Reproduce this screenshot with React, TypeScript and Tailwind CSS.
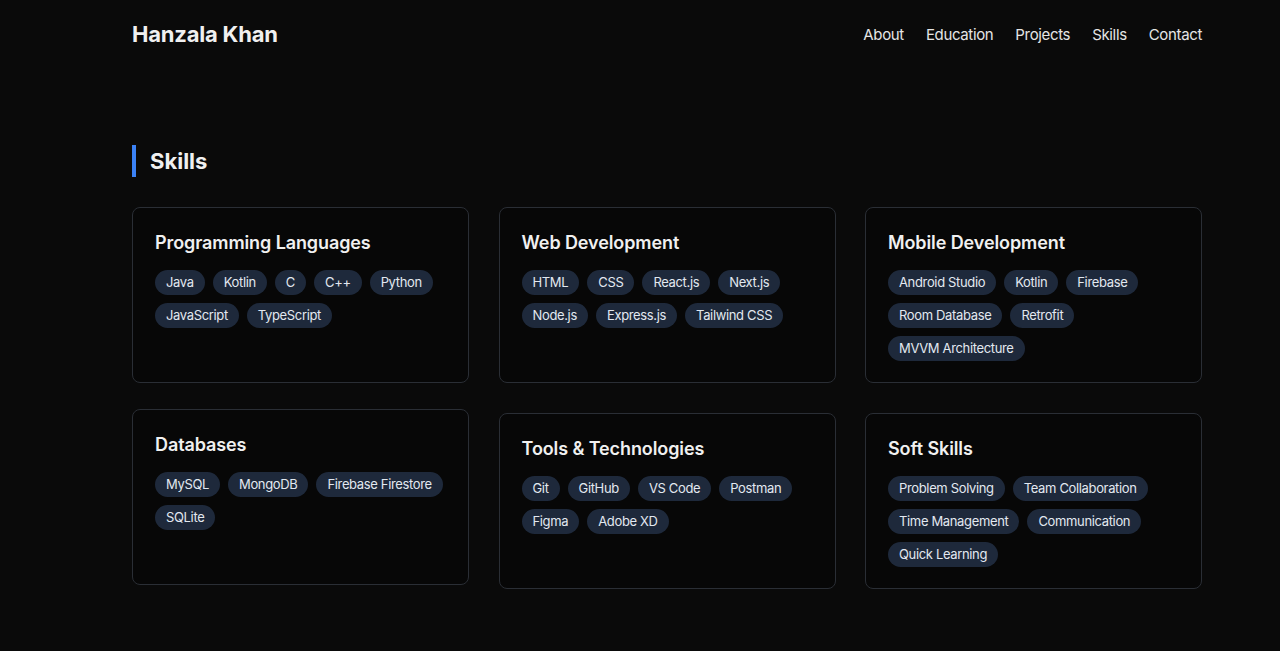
const navLinks = ["About", "Education", "Projects", "Skills", "Contact"]

const skillGroups = [
    { heading: "Programming Languages", items: ["Java", "Kotlin", "C", "C++", "Python", "JavaScript", "TypeScript"] },
    { heading: "Web Development", items: ["HTML", "CSS", "React.js", "Next.js", "Node.js", "Express.js", "Tailwind CSS"] },
    { heading: "Mobile Development", items: ["Android Studio", "Kotlin", "Firebase", "Room Database", "Retrofit", "MVVM Architecture"] },
    { heading: "Databases", items: ["MySQL", "MongoDB", "Firebase Firestore", "SQLite"], raised: true },
    { heading: "Tools & Technologies", items: ["Git", "GitHub", "VS Code", "Postman", "Figma", "Adobe XD"] },
    { heading: "Soft Skills", items: ["Problem Solving", "Team Collaboration", "Time Management", "Communication", "Quick Learning"] },
]

type SkillCardProps = { heading: string; items: string[]; raised?: boolean }

const SkillCard = ({ heading, items, raised }: SkillCardProps) => {
    return (
        <div
            className={
                raised
                    ? "rounded-lg border border-[#2a2e35] bg-[#070707] px-[22px] py-[21px] -translate-y-1"
                    : "rounded-lg border border-[#2a2e35] bg-[#070707] px-[22px] py-[21px]"
            }
        >
            <h3 className="text-[18px] font-semibold leading-7 text-[#f0f0f0] mb-[13px] tracking-[-0.1px]">{heading}</h3>
            <ul className="flex flex-wrap gap-2">
                {items.map((item) => (
                    <li key={item} className="rounded-full bg-[#1e293b] px-[11px] py-1 text-[13px] leading-[17px] tracking-[-0.35px] text-[#e2e8f0]">
                        {item}
                    </li>
                ))}
            </ul>
        </div>
    )
}

export default function App() {
    return (
        <div className="min-h-[651px] bg-[#0a0a0a] font-['Inter',sans-serif] text-[#e5e5e5]">
            <header className="pl-[132px] w-[1202px] h-[68px] flex items-center justify-between">
                <span className="text-[22px] font-bold text-[#f0f0f0] tracking-[-0.2px]">Hanzala Khan</span>
                <nav className="flex gap-[22px] text-[15px] tracking-[-0.35px] pt-[2px]">
                    {navLinks.map((link) => (
                        <a key={link} href="#" className="text-[#e5e5e5]">
                            {link}
                        </a>
                    ))}
                </nav>
            </header>

            <section className="pl-[132px] pt-[77px] pb-[60px]">
                <h2 className="border-l-4 border-[#3b82f6] pl-[14px] text-[22px] font-bold leading-8 text-[#f0f0f0] mb-[30px]">
                    Skills
                </h2>
                <div className="grid w-[1070px] grid-cols-3 gap-x-[29.5px] gap-y-[30px]">
                    {skillGroups.map((group) => (
                        <SkillCard key={group.heading} heading={group.heading} items={group.items} raised={group.raised} />
                    ))}
                </div>
            </section>
        </div>
    )
}
